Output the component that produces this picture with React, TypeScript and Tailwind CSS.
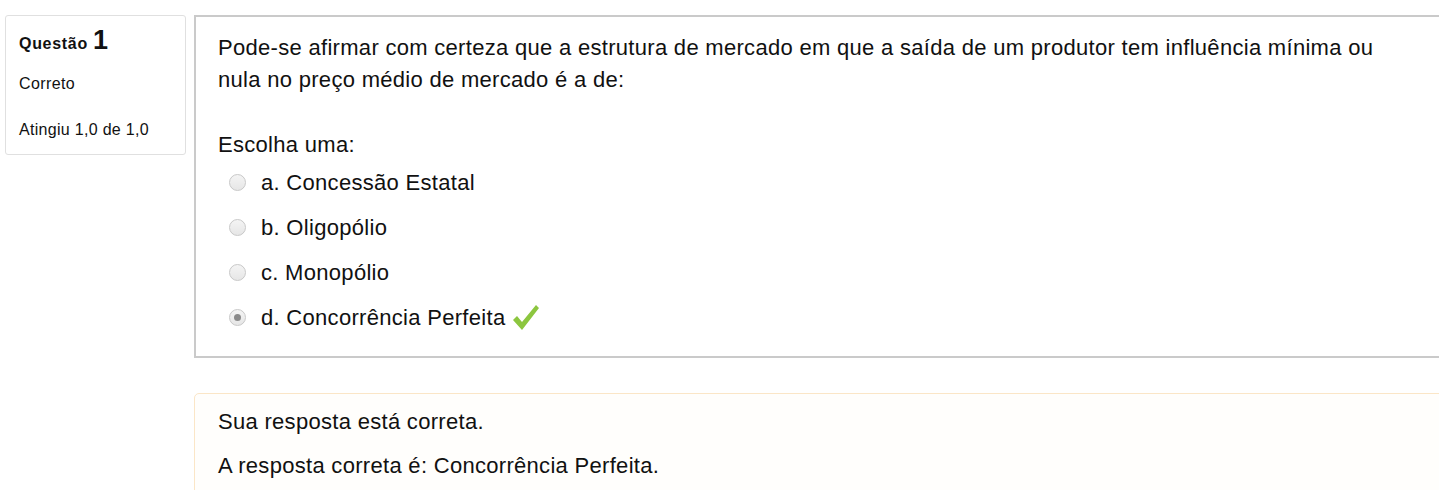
import React from "react";

const options = [
  { label: "a. Concessão Estatal", checked: false },
  { label: "b. Oligopólio", checked: false },
  { label: "c. Monopólio", checked: false },
  { label: "d. Concorrência Perfeita", checked: true },
];

function Radio({ checked }: { checked: boolean }) {
  return (
    <span className="w-[17px] h-[17px] rounded-full border border-[#c8c8c8] bg-gradient-to-b from-[#f4f4f4] to-[#e6e6e6] flex items-center justify-center shrink-0">
      {checked && <span className="w-[7px] h-[7px] rounded-full bg-[#8a8a8a]" />}
    </span>
  );
}

function Check() {
  return (
    <svg width="27" height="27" viewBox="0 0 27 27" className="ml-[7px]">
      <path d="M1 16 L5 12 L10 18 L24 1 L27 4 L10 26 Z" fill="#8cc63f" />
    </svg>
  );
}

export default function App() {
  return (
    <div className="w-[1439px] h-[490px] overflow-hidden bg-white text-[#111]" style={{ fontFamily: '"Liberation Sans", Arial, sans-serif' }}>
      <div className="flex pt-[15px]">
        <div className="ml-[5px] w-[181px] shrink-0 self-start">
          <div className="border border-[#e0e0e0] rounded-[3px] bg-white h-[140px] px-[13px] pt-[11px]">
            <div className="flex items-baseline">
              <span className="text-[16px] font-bold tracking-[0.7px]">Questão</span>
              <span className="text-[27px] font-bold ml-[5px] leading-none">1</span>
            </div>
            <div className="text-[16px] tracking-[0.4px] mt-[16px]">Correto</div>
            <div className="text-[16px] tracking-[0.3px] mt-[22px]">Atingiu 1,0 de 1,0</div>
          </div>
        </div>
        <div className="ml-[8px] flex flex-col shrink-0">
          <div className="w-[1300px] h-[343px] border-2 border-[#cacaca] bg-white pl-[22px] pt-[15px] tracking-[0.3px]">
            <p className="text-[22px] leading-[32px] w-[1180px]">
              Pode-se afirmar com certeza que a estrutura de mercado em que a saída de um produtor tem influência mínima ou nula no preço médio de mercado é a de:
            </p>
            <div className="text-[22px] leading-[32px] mt-[33px]">Escolha uma:</div>
            <div className="flex flex-col -mt-[1px]">
              {options.map((o) => (
                <div key={o.label} className="flex items-center h-[45px] pl-[11px]">
                  <Radio checked={o.checked} />
                  <span className="text-[22px] ml-[15px]">{o.label}</span>
                  {o.checked && <Check />}
                </div>
              ))}
            </div>
          </div>
          <div className="mt-[35px] w-[1300px] h-[120px] border border-[#fbe6c7] rounded-[5px] bg-[#fffefc] pl-[23px] pt-[12px] tracking-[0.3px]">
            <div className="text-[22px] leading-[32px]">Sua resposta está correta.</div>
            <div className="text-[22px] leading-[32px] mt-[12px]">A resposta correta é: Concorrência Perfeita.</div>
          </div>
        </div>
      </div>
    </div>
  );
}
